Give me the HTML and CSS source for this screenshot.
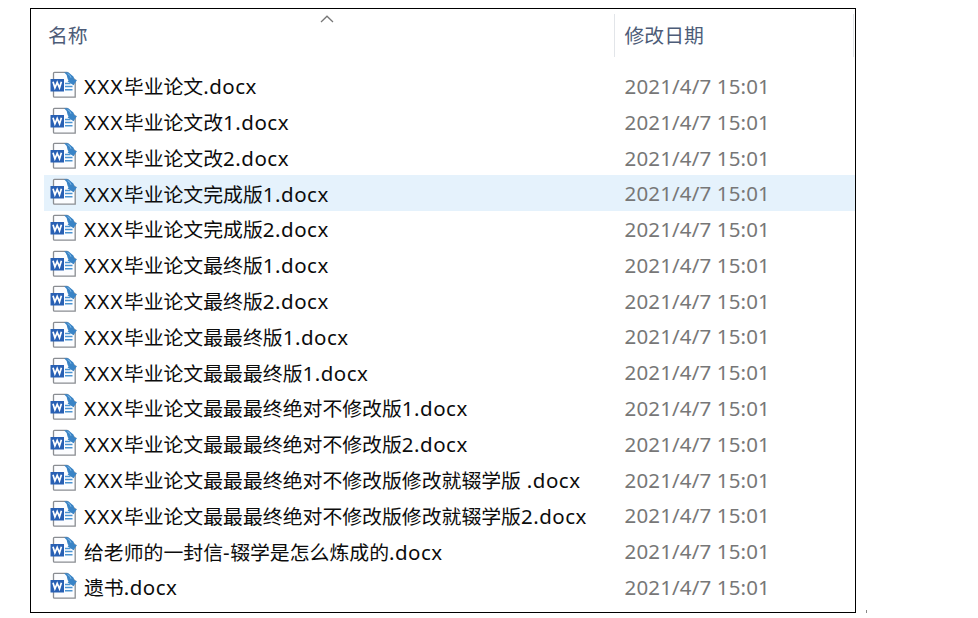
FILE: index.html
```html
<!DOCTYPE html>
<html lang="zh-CN">
<head>
<meta charset="utf-8">
<title>名称</title>
<link rel="stylesheet" href="styles.css">
</head>
<body>
<svg class="defs" width="0" height="0">
  <symbol id="word" viewBox="0 0 27 28">
    <path d="M4.5 1.3H17L25.2 9V26.2H4.5Q3.5 26.2 3.5 25.2V2.3Q3.5 1.3 4.5 1.3Z" fill="#fcfdff" stroke="#8a8d92" stroke-width="1.3"/>
    <path d="M14 1.2H18.3L23.4 5.4L24.4 8.6L27 9L23.6 14.2L17.6 10.4L18.6 9.2Q17.6 8.6 17.2 6.2Q16.8 3.2 14 1.2Z" fill="#3a84c6"/>
    <path d="M17.6 2.6Q20.6 4 21 6.8" fill="none" stroke="#82b9e5" stroke-width="1"/>
    <path d="M15 12.4H20.5M15 15.6H22.5M15 18.8H22.5" stroke="#4b94d1" stroke-width="1.5"/>
    <path d="M.5 8H14V20.5H.5Z" fill="#2860b4"/>
    <path d="M3 10.8L4.9 16.8L7.2 11.4L9.5 16.8L11.4 10.8" fill="none" stroke="#fff" stroke-width="1.7"/>
  </symbol>
</svg>
<main class="frame">
  <header class="head">
    <div class="col-name">名称<svg class="sort" width="14" height="8" viewBox="0 0 14 8"><path d="M1 7L7 1.2L13 7" fill="none" stroke="#777" stroke-width="1.3"/></svg></div>
    <div class="col-date">修改日期</div>
  </header>
  <ul class="files">
    <li><svg class="icon"><use href="#word"/></svg><span class="name"><b>XXX</b>毕业论文<i>.docx</i></span><time>2021/4/7 15:01</time></li>
    <li><svg class="icon"><use href="#word"/></svg><span class="name"><b>XXX</b>毕业论文改<i>1.docx</i></span><time>2021/4/7 15:01</time></li>
    <li><svg class="icon"><use href="#word"/></svg><span class="name"><b>XXX</b>毕业论文改<i>2.docx</i></span><time>2021/4/7 15:01</time></li>
    <li class="hover"><svg class="icon"><use href="#word"/></svg><span class="name"><b>XXX</b>毕业论文完成版<i>1.docx</i></span><time>2021/4/7 15:01</time></li>
    <li><svg class="icon"><use href="#word"/></svg><span class="name"><b>XXX</b>毕业论文完成版<i>2.docx</i></span><time>2021/4/7 15:01</time></li>
    <li><svg class="icon"><use href="#word"/></svg><span class="name"><b>XXX</b>毕业论文最终版<i>1.docx</i></span><time>2021/4/7 15:01</time></li>
    <li><svg class="icon"><use href="#word"/></svg><span class="name"><b>XXX</b>毕业论文最终版<i>2.docx</i></span><time>2021/4/7 15:01</time></li>
    <li><svg class="icon"><use href="#word"/></svg><span class="name"><b>XXX</b>毕业论文最最终版<i>1.docx</i></span><time>2021/4/7 15:01</time></li>
    <li><svg class="icon"><use href="#word"/></svg><span class="name"><b>XXX</b>毕业论文最最最终版<i>1.docx</i></span><time>2021/4/7 15:01</time></li>
    <li><svg class="icon"><use href="#word"/></svg><span class="name"><b>XXX</b>毕业论文最最最终绝对不修改版<i>1.docx</i></span><time>2021/4/7 15:01</time></li>
    <li><svg class="icon"><use href="#word"/></svg><span class="name"><b>XXX</b>毕业论文最最最终绝对不修改版<i>2.docx</i></span><time>2021/4/7 15:01</time></li>
    <li><svg class="icon"><use href="#word"/></svg><span class="name"><b>XXX</b>毕业论文最最最终绝对不修改版修改就辍学版<i> .docx</i></span><time>2021/4/7 15:01</time></li>
    <li><svg class="icon"><use href="#word"/></svg><span class="name"><b>XXX</b>毕业论文最最最终绝对不修改版修改就辍学版<i>2.docx</i></span><time>2021/4/7 15:01</time></li>
    <li><svg class="icon"><use href="#word"/></svg><span class="name">给老师的一封信<i>-</i>辍学是怎么炼成的<i>.docx</i></span><time>2021/4/7 15:01</time></li>
    <li><svg class="icon"><use href="#word"/></svg><span class="name">遗书<i>.docx</i></span><time>2021/4/7 15:01</time></li>
  </ul>
</main>
<span class="speck"></span>
</body>
</html>
```
FILE: styles.css
```css
* { box-sizing: border-box; }
body {
  margin: 0;
  height: 618px;
  overflow: hidden;
  background: #fff;
  color: #161616;
  font-family: "Noto Sans", "Noto Sans CJK SC", sans-serif;
}
.defs { position: absolute; }
.frame {
  width: 826px;
  height: 605px;
  margin: 8px 0 0 30px;
  border: 1px solid #000;
  overflow: hidden;
}
.head {
  display: flex;
  height: 43px;
  margin: 5px 1px 11px 0;
  color: #4d5c78;
  font: 400 19.85px/42px "Noto Sans CJK SC", sans-serif;
}
.col-name { position: relative; width: 583px; padding-left: 17px; }
.sort { position: absolute; left: 289px; top: 1px; }
.col-date { flex: 1; padding-left: 9.5px; border: solid #e2e5e9; border-width: 0 1px; }
.files { list-style: none; margin: 0; padding: 0 0 0 13px; }
.files li {
  display: flex;
  align-items: center;
  height: 35.8px;
  padding-left: 6px;
}
.files .hover { background: #e5f2fc; }
.icon { width: 27px; height: 28px; margin: -2.4px 7px 0 0; }
.name {
  width: 540.5px;
  white-space: pre;
  color: #0c0c0c;
  font: 400 19.87px/35.4px "Noto Sans CJK SC", sans-serif;
}
.name b, .name i { font: 400 20.5px/30px "Noto Sans", sans-serif; }
.name b { letter-spacing: 1.25px; }
.name i { letter-spacing: .5px; }
time { color: #777; font-size: 20.5px; line-height: 36px; letter-spacing: .15px; white-space: nowrap; }
.speck { position: absolute; left: 866px; top: 610px; width: 1px; height: 3px; background: #888; }
```
